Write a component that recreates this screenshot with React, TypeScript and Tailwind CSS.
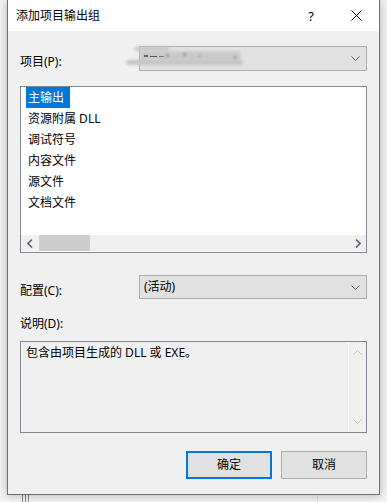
import React from "react";

function Chevron({ up = false, color = "#606060" }: { up?: boolean; color?: string }) {
  return (
    <svg width="9" height="5" viewBox="0 0 9 5" className="block">
      <polyline
        points={up ? "0.5,4.5 4.5,0.5 8.5,4.5" : "0.5,0.5 4.5,4.5 8.5,0.5"}
        fill="none"
        stroke={color}
        strokeWidth="1"
      />
    </svg>
  );
}

function SideChevron({ left = false }: { left?: boolean }) {
  return (
    <svg width="6" height="9" viewBox="0 0 6 9" className="block">
      <polyline
        points={left ? "5,0.5 1,4.5 5,8.5" : "1,0.5 5,4.5 1,8.5"}
        fill="none"
        stroke="#606060"
        strokeWidth="1.6"
      />
    </svg>
  );
}

export default function App() {
  const items = ["主输出", "资源附属 DLL", "调试符号", "内容文件", "源文件", "文档文件"];
  return (
    <div className="relative w-[387px] h-[502px] overflow-hidden bg-[#f3f3f3] font-['Noto_Sans','Noto_Sans_CJK_SC',sans-serif] text-[12px] text-black">
      {/* window behind */}
      <div className="absolute left-[22px] top-[470px] h-[40px] flex gap-[2px]">
        <div className="w-[1px] h-full bg-[#8a8a8a]" />
        <div className="w-[1px] h-full bg-[#8a8a8a]" />
        <div className="w-[1px] h-full bg-[#8a8a8a]" />
      </div>
      <div className="absolute left-[317px] top-[470px] h-[40px] w-[1px] bg-[#d6e0ea]" />

      {/* dialog */}
      <div className="absolute left-[7px] top-0 w-[373px] h-[495px] border-x border-b border-[#6f6f6f] bg-[#f0f0f0] shadow-[0_0_9px_rgba(0,0,0,0.28)] flex flex-col">
        {/* title bar */}
        <div className="h-[31px] bg-white flex items-center shrink-0">
          <div className="pl-[8px] leading-[16px] pt-[1px]">添加项目输出组</div>
          <div className="ml-auto flex h-full">
            <div className="w-[46px] h-full flex items-center justify-center text-[13px] leading-none pt-[1px] pl-[2px]">?</div>
            <div className="w-[46px] h-full flex items-center justify-center">
              <svg width="11" height="11" viewBox="0 0 11 11">
                <line x1="0.5" y1="0.5" x2="10.5" y2="10.5" stroke="#000" strokeWidth="1" />
                <line x1="10.5" y1="0.5" x2="0.5" y2="10.5" stroke="#000" strokeWidth="1" />
              </svg>
            </div>
          </div>
        </div>

        <div className="flex flex-col px-[12px] pb-[15px] flex-1">
          {/* project row */}
          <div className="mt-[15px] h-[25px] flex items-center">
            <div className="w-[119px] mt-[6px] leading-[16px]">项目(P):</div>
            <div className="flex-1 h-full border border-[#adadad] bg-[#e1e1e1] flex items-center justify-end pr-[6px]">
              <Chevron />
            </div>
          </div>

          {/* list box */}
          <div className="mt-[15px] h-[167px] border border-[#828790] bg-white flex flex-col">
            <div className="flex-1 pl-[5px] flex flex-col">
              {items.map((t, i) => (
                <div key={t} className="h-[21px] flex items-center">
                  <span
                    className={
                      i === 0
                        ? "bg-[#0078d7] text-white h-[21px] leading-[22px] w-[44px] pl-[2px]"
                        : "h-[21px] leading-[22px] pl-[2px]"
                    }
                  >
                    {t}
                  </span>
                </div>
              ))}
            </div>
            <div className="h-[16px] bg-[#f0f0f0] flex items-center">
              <div className="w-[17px] h-full flex items-center justify-center">
                <SideChevron left />
              </div>
              <div className="ml-[1px] w-[51px] h-full bg-[#cdcdcd]" />
              <div className="ml-auto w-[17px] h-full flex items-center justify-center">
                <SideChevron />
              </div>
            </div>
            <div className="h-[1px] bg-white" />
          </div>

          {/* config row */}
          <div className="mt-[22px] h-[24px] flex items-center">
            <div className="w-[119px] mt-[8px] leading-[16px]">配置(C):</div>
            <div className="flex-1 h-full border border-[#adadad] bg-[#e1e1e1] flex items-center pl-[4px] pr-[6px]">
              <span className="leading-[16px]">(活动)</span>
              <span className="ml-auto">
                <Chevron />
              </span>
            </div>
          </div>

          {/* description */}
          <div className="mt-[17px] h-[16px] leading-[16px]">说明(D):</div>
          <div className="mt-[9px] h-[92px] border border-[#828790] bg-[#f0f0f0] flex">
            <div className="flex-1 pl-[5px] pt-[3px] leading-[16px]">包含由项目生成的 DLL 或 EXE。</div>
            <div className="w-[18px] h-full border-l border-white flex flex-col items-center justify-between py-[8px]">
              <Chevron up color="#c2c2c2" />
              <Chevron color="#c2c2c2" />
            </div>
          </div>

          {/* buttons */}
          <div className="mt-[18px] flex justify-end gap-[9px]">
            <div className="w-[86px] h-[28px] border-2 border-[#0078d7] bg-[#e1e1e1] flex items-center justify-center leading-[16px]">
              确定
            </div>
            <div className="w-[86px] h-[28px] border border-[#adadad] bg-[#e1e1e1] flex items-center justify-center leading-[16px]">
              取消
            </div>
          </div>
        </div>

        {/* blurred smudge over project combobox */}
        <div className="absolute left-[126px] top-[47px] w-[36px] h-[4px] rounded-full bg-[#c6c6c6] blur-[1.5px]" />
        <div className="absolute left-[132px] top-[51px] w-[100px] h-[10px] bg-[#cacaca] blur-[1.5px]" />
        <div className="absolute left-[118px] top-[60px] w-[117px] h-[5px] rounded-full bg-[#c4c4c4] blur-[1.5px]" />
        <div className="absolute left-[136px] top-[55px] w-[4px] h-[2px] bg-[#666] blur-[0.7px]" />
        <div className="absolute left-[142px] top-[56px] w-[7px] h-[1px] bg-[#555] blur-[0.6px]" />
        <div className="absolute left-[151px] top-[56px] w-[5px] h-[1px] bg-[#777] blur-[0.6px]" />
        <div className="absolute left-[158px] top-[54px] w-[3px] h-[3px] bg-[#999] blur-[0.8px]" />
        <div className="absolute left-[175px] top-[53px] w-[3px] h-[3px] bg-[#999] blur-[0.8px]" />
        <div className="absolute left-[190px] top-[55px] w-[3px] h-[2px] bg-[#aaa] blur-[0.8px]" />
        <div className="absolute left-[226px] top-[56px] w-[2px] h-[3px] bg-[#999] blur-[0.8px]" />
      </div>
    </div>
  );
}
